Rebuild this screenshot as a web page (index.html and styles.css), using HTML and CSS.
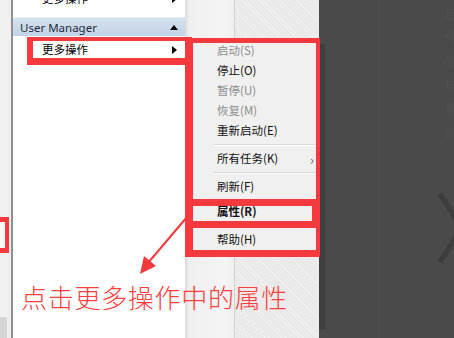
FILE: index.html
```html
<!DOCTYPE html>
<html lang="zh">
<head>
<meta charset="utf-8">
<link rel="stylesheet" href="styles.css">
</head>
<body>
<div class="screen">
  <div class="left-strip">
    <div class="left-fill"></div>
    <div class="left-bottom"></div>
  </div>
  <div class="panel">
    <div class="row row-cut"><span class="row-text">更多操作</span><span class="tri-r"></span></div>
    <div class="header"><span class="header-text">User Manager</span><span class="tri-u"></span></div>
    <div class="row row-sel"><span class="row-text">更多操作</span><span class="tri-r"></span></div>
  </div>
  <div class="gutter"></div>
  <div class="texture"></div>
  <div class="dark">
    <div class="shadow"></div>
    <div class="dark-a"></div>
    <div class="dark-b">
      <div class="ghost">
        <span>启</span><span>停</span><span>暂</span><span>恢</span><span>重</span><span>所</span>
      </div>
      <svg class="chev" width="16" height="72" viewBox="0 0 16 72"><path d="M2 2 L20 30 M20 42 L2 70" stroke="#3d3d3d" stroke-width="5" fill="none"/></svg>
    </div>
  </div>

  <div class="menu">
    <div class="item off">启动(S)</div>
    <div class="item">停止(O)</div>
    <div class="item off">暂停(U)</div>
    <div class="item off">恢复(M)</div>
    <div class="item">重新启动(E)</div>
    <div class="sep"></div>
    <div class="item sub">所有任务(K)<span class="sub-arrow">›</span></div>
    <div class="sep"></div>
    <div class="item">刷新(F)</div>
    <div class="item bold tall">属性(R)</div>
    <div class="item help">帮助(H)</div>
  </div>

  <div class="mark mark-row"></div>
  <div class="mark mark-menu"></div>
  <div class="mark mark-prop"></div>
  <div class="mark mark-left"></div>

  <svg class="arrow" width="70" height="70" viewBox="0 0 70 70">
    <line x1="57" y1="6" x2="18" y2="52" stroke="#f23a3c" stroke-width="2"/>
    <polygon points="10,63 14,45 26,55" fill="#f23a3c"/>
  </svg>

  <div class="note">点击更多操作中的属性</div>
</div>
</body>
</html>
```

FILE: styles.css
```css
* { box-sizing: border-box; }
html, body { margin: 0; padding: 0; }
body { width: 454px; height: 338px; overflow: hidden; background: #4a4a4a; }

.screen {
  position: relative;
  display: flex;
  width: 454px;
  height: 338px;
  font-family: "Noto Sans CJK SC", "Noto Sans", sans-serif;
}

.left-strip {
  width: 13px;
  display: flex;
  flex-direction: column;
  background: #f0f0f0;
  border-right: 2px solid #8f8f8f;
}
.left-fill { flex: 1; }
.left-bottom { height: 21px; width: 7px; background: #d5d5d5; }

.panel {
  width: 172px;
  background: #ffffff;
  display: flex;
  flex-direction: column;
}
.row {
  display: flex;
  align-items: center;
  justify-content: space-between;
  height: 20px;
  padding: 0 8px 0 29px;
  font-size: 11.5px;
  color: #000;
}
.row-cut { margin-top: -9px; height: 16px; }
.row-sel { margin-top: 4px; }
.row-text { line-height: 1; }
.tri-r {
  width: 0; height: 0;
  border-top: 4px solid transparent;
  border-bottom: 4px solid transparent;
  border-left: 5px solid #000;
}
.header {
  margin-top: 10px;
  height: 19px;
  display: flex;
  align-items: center;
  justify-content: space-between;
  padding: 0 7px 0 7px;
  background: linear-gradient(#d5e1ee, #c2d3e6);
  border-top: 1px solid #e6edf5;
}
.header-text {
  font-family: "Noto Sans", sans-serif;
  font-size: 11.5px;
  color: #1d2a3a;
}
.tri-u {
  width: 0; height: 0;
  border-left: 4px solid transparent;
  border-right: 4px solid transparent;
  border-bottom: 5px solid #000;
}

.gutter {
  width: 50px;
  background: linear-gradient(90deg, #d9d9d9 0px, #efefef 4px, #f5f5f5 40px, #efefef 48px);
  border-right: 1px solid #d2d2d2;
}
.texture {
  width: 84px;
  background-color: #e8e8e8;
  background-image: repeating-linear-gradient(45deg, rgba(255,255,255,0.35) 0 1px, rgba(0,0,0,0) 1px 3px);
}
.dark {
  width: 135px;
  display: flex;
  align-items: flex-start;
  background: #4a4a4a;
}
.shadow { width: 6px; height: 285px; margin-top: 44px; background: #3e3e3e; }
.dark-a { width: 55px; height: 338px; border-right: 1px solid #4f4f4f; }
.dark-b {
  flex: 1;
  height: 338px;
  display: flex;
  flex-direction: column;
  align-items: flex-end;
}
.ghost {
  display: flex;
  flex-direction: column;
  gap: 10px;
  padding-top: 6px;
  margin-right: -4px;
  font-size: 13px;
  line-height: 14px;
  color: #4f4f4f;
}
.chev { margin-top: 52px; }

.menu {
  position: absolute;
  left: 193px;
  top: 38px;
  width: 123px;
  height: 216px;
  padding-top: 3px;
  background: #f0f0f0;
  font-size: 11.5px;
  display: flex;
  flex-direction: column;
}
.item {
  height: 20px;
  display: flex;
  align-items: center;
  padding-left: 24px;
  color: #111;
  line-height: 1;
}
.item.off { color: #8d8d8d; }
.item.sub { justify-content: space-between; padding-right: 2px; }
.sub-arrow { color: #666; font-size: 13px; }
.item.bold { font-weight: bold; }
.item.tall { height: 30px; }
.item.help { height: 26px; }
.sep {
  height: 8px;
  margin-left: 20px;
  background: linear-gradient(#f0f0f0 3px, #d7d7d7 3px, #d7d7d7 4px, #ffffff 4px, #ffffff 5px, #f0f0f0 5px);
}

.mark { position: absolute; border: 0 solid #f5393d; }
.mark-row { left: 27px; top: 37px; width: 165px; height: 28px; border-width: 4px 3px 7px 6px; }
.mark-menu { left: 185px; top: 38px; width: 135px; height: 219px; border-width: 5px 4px 7px 8px; }
.mark-prop { left: 185px; top: 199px; width: 135px; height: 29px; border-width: 7px 8px 7px 8px; }
.mark-left { left: -3px; top: 217px; width: 12px; height: 36px; border-width: 5px 4px 5px 0; background: #f7f7f7; }

.arrow { position: absolute; left: 130px; top: 211px; }

.note {
  position: absolute;
  left: 21px;
  top: 282px;
  font-size: 26px;
  line-height: 30px;
  font-weight: 300;
  color: #ff3f3f;
  letter-spacing: 0.7px;
}
```
